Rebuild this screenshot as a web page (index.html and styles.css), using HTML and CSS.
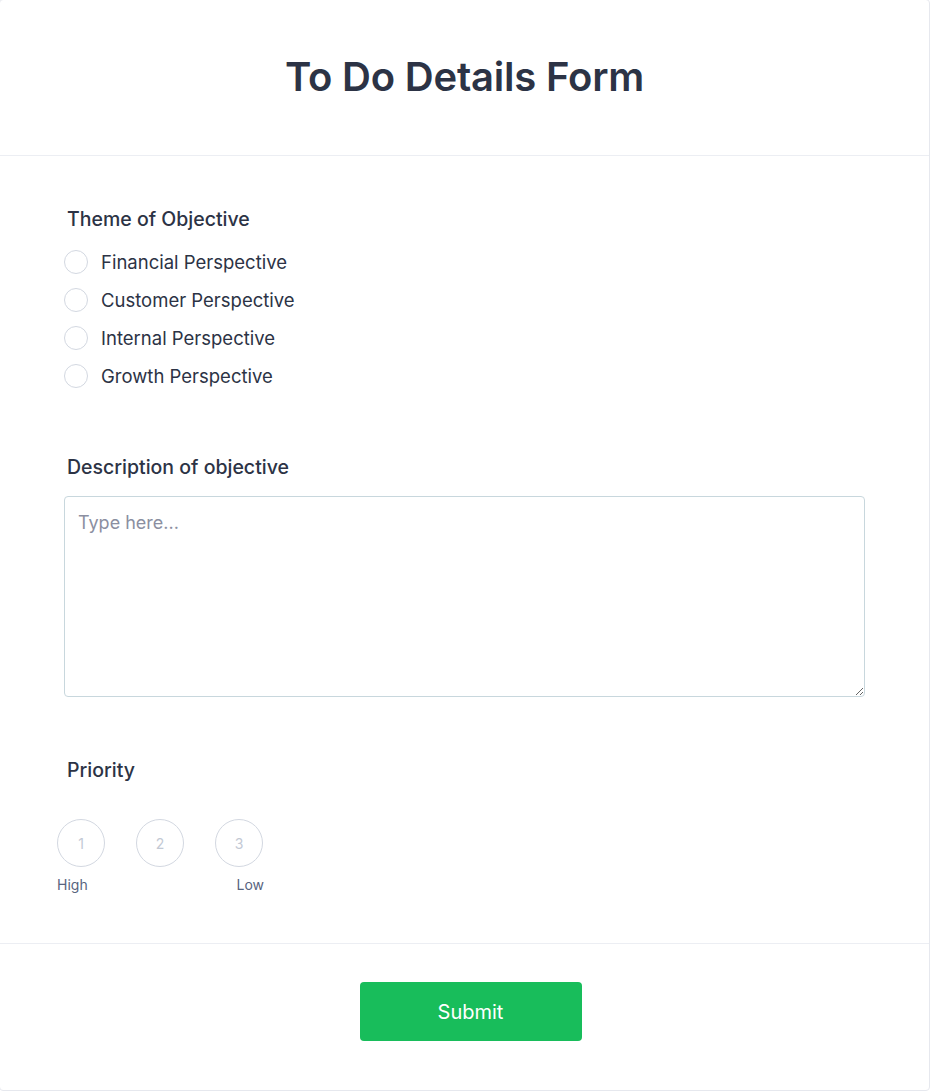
FILE: index.html
```html
<!DOCTYPE html>
<html lang="en">
<head>
  <meta charset="UTF-8">
  <meta name="viewport" content="width=device-width, initial-scale=1.0">
  <title>To Do Details Form</title>
  <link rel="stylesheet" href="styles.css">
</head>
<body>
  <form class="card">
    <header class="card-head">
      <h1>To Do Details Form</h1>
    </header>

    <div class="card-body">
      <div class="field">
        <div class="label">Theme of Objective</div>
        <ul class="choices">
          <li><span class="radio"></span>Financial Perspective</li>
          <li><span class="radio"></span>Customer Perspective</li>
          <li><span class="radio"></span>Internal Perspective</li>
          <li><span class="radio"></span>Growth Perspective</li>
        </ul>
      </div>

      <div class="field field-desc">
        <label class="label" for="desc">Description of objective</label>
        <textarea id="desc" placeholder="Type here..."></textarea>
      </div>

      <div class="field field-priority">
        <div class="label">Priority</div>
        <div class="scale">
          <span class="dot">1</span>
          <span class="dot">2</span>
          <span class="dot">3</span>
        </div>
        <div class="scale-legend">
          <span>High</span>
          <span>Low</span>
        </div>
      </div>
    </div>

    <footer class="card-foot">
      <button type="button" class="submit">Submit</button>
    </footer>
  </form>
</body>
</html>
```

FILE: styles.css
```css
body {
  margin: 0;
  background: #fff;
  font-family: Inter, "Noto Sans", sans-serif;
  color: #2c3345;
}

.card {
  box-sizing: border-box;
  width: 931px;
  height: 1092px;
  margin: -1px 0 0 -1px;
  border: 1px solid #e6e8ee;
  border-radius: 4px;
  display: flex;
  flex-direction: column;
}

.card-head {
  height: 155px;
  border-bottom: 1px solid #eceef3;
  display: flex;
  align-items: center;
  justify-content: center;
}

.card-head h1 {
  margin: 0 0 2px;
  font-size: 40px;
  font-weight: 600;
  letter-spacing: -0.2px;
}

.card-body {
  flex: 1;
  padding: 49px 65px 0 65px;
}

.label {
  display: block;
  padding: 0 0 0 2px;
  font-size: 19.5px;
  font-weight: 500;
  line-height: 28px;
  color: #2c3345;
}

.choices {
  list-style: none;
  margin: 17px 0 0;
  padding: 0;
  display: flex;
  flex-direction: column;
  gap: 14px;
}

.choices li {
  display: flex;
  align-items: center;
  gap: 13px;
  margin-left: -1px;
  font-size: 18.5px;
  line-height: 24px;
}

.radio {
  box-sizing: border-box;
  width: 24px;
  height: 24px;
  border: 1px solid #d3d8e1;
  border-radius: 50%;
}

.field-desc {
  margin-top: 65px;
}

.field-desc textarea {
  display: block;
  box-sizing: border-box;
  width: 801px;
  height: 201px;
  margin: 15px 0 0 -1px;
  padding: 14px 13px;
  border: 1px solid #c8d7dd;
  border-radius: 4px;
  font-family: inherit;
  font-size: 18px;
  line-height: 24px;
  color: #2c3345;
}

.field-desc textarea::placeholder {
  color: #8b8fa1;
}

.field-priority {
  margin-top: 59px;
}

.scale {
  display: flex;
  gap: 31px;
  margin: 35px 0 0 -8px;
}

.dot {
  box-sizing: border-box;
  width: 48px;
  height: 48px;
  border: 1px solid #d3d8e1;
  border-radius: 50%;
  display: flex;
  align-items: center;
  justify-content: center;
  font-size: 14px;
  color: #c3c9d4;
}

.scale-legend {
  width: 207px;
  margin: 8px 0 0 -8px;
  display: flex;
  justify-content: space-between;
  font-size: 14px;
  line-height: 20px;
  color: #57647e;
}

.card-foot {
  height: 146px;
  border-top: 1px solid #eceef3;
  display: flex;
  justify-content: center;
  align-items: flex-start;
  padding-left: 12px;
}

.submit {
  margin-top: 38px;
  width: 222px;
  height: 59px;
  border: 0;
  border-radius: 4px;
  background: #18bd5b;
  color: #fff;
  font-family: inherit;
  font-size: 20px;
  font-weight: 400;
}
```
